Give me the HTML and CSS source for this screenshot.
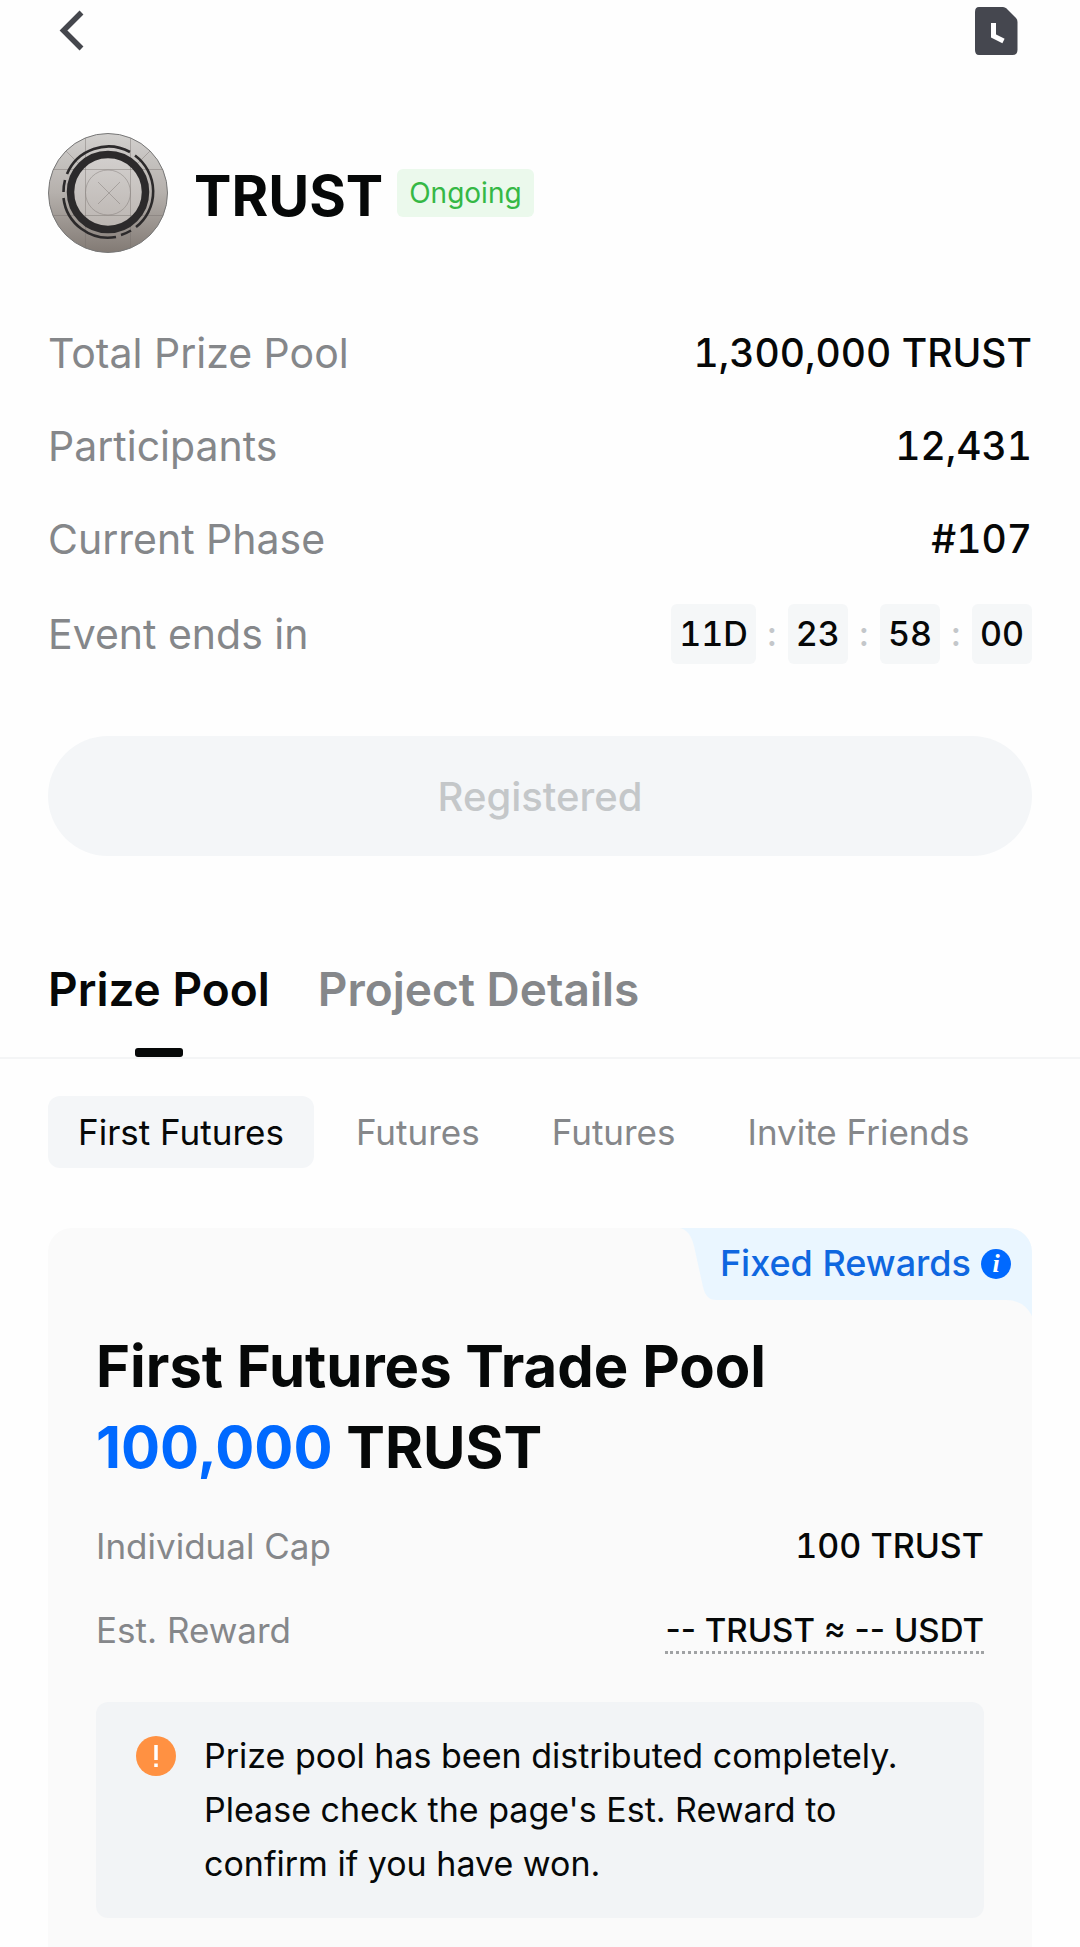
FILE: index.html
```html
<!DOCTYPE html>
<html lang="en">
<head>
    <meta charset="UTF-8">
    <meta name="viewport" content="width=device-width, initial-scale=1.0">
    <title>TRUST</title>
    <link rel="stylesheet" href="styles.css">
</head>
<body>
    <header class="topbar">
        <button type="button" class="icon-btn" aria-label="Back">
            <svg width="48" height="48" viewBox="0 0 48 48" fill="none" stroke="#45474d" stroke-width="5.500">
                <path d="M33.500 5.500 L15.500 23.500 L33.500 41.500"/>
            </svg>
        </button>
        <button type="button" class="icon-btn" aria-label="History">
            <svg width="44" height="48" viewBox="0 0 44 48">
                <path d="M5 0 H29 Q31 0 32.500 1.500 L42 11 Q43.500 12.500 43.500 15 V43 Q43.500 48 38.500 48 H5 Q1 48 1 43 V5 Q1 0 5 0 Z" fill="#45474f"/>
                <path d="M19.500 16 V29 L29.500 34" fill="none" stroke="#fff" stroke-width="5"/>
            </svg>
        </button>
    </header>

    <main>
        <section class="project">
            <div class="project-head">
                <svg class="logo" width="120" height="120" viewBox="0 0 120 120" fill="none">
                    <defs>
                        <linearGradient id="metal" x1="0" y1="0" x2="0" y2="1">
                            <stop offset="0" stop-color="#d2d0ce"/>
                            <stop offset="0.5" stop-color="#b5b0ac"/>
                            <stop offset="1" stop-color="#827a74"/>
                        </linearGradient>
                        <linearGradient id="shine" x1="0" y1="0" x2="0" y2="1">
                            <stop offset="0" stop-color="#d3d0ce"/>
                            <stop offset="1" stop-color="#bbb5b1"/>
                        </linearGradient>
                    </defs>
                    <circle cx="60" cy="60" r="59.500" fill="url(#metal)" stroke="#777"/>
                    <circle cx="60" cy="59" r="36" fill="url(#shine)"/>
                    <g stroke="#77716d" stroke-width="0.600" opacity="0.700">
                        <path d="M37.500 5 V115 M82.500 5 V115 M5 36.500 H115 M5 82.500 H115"/>
                        <path d="M18 18 L30 30 M102 18 L90 30 M50 49 L72 71 M72 49 L50 71"/>
                        <circle cx="60" cy="59.500" r="22.500"/>
                    </g>
                    <circle cx="60" cy="59" r="37.500" stroke="#2c2a2b" stroke-width="7.500"/>
                    <g stroke="#2c2a2b" stroke-width="2.600">
                        <path d="M19 41 A45 45 0 0 1 82 19"/>
                        <path d="M87 22.500 A45 45 0 0 1 88 94"/>
                        <path d="M83 97.500 A45 45 0 0 1 73 102"/>
                        <path d="M68 104 A45 45 0 0 1 15.500 65"/>
                        <path d="M15.500 59 A45 45 0 0 1 17 47"/>
                    </g>
                </svg>
                <h1 class="project-name">TRUST</h1>
                <span class="status">Ongoing</span>
            </div>

            <dl class="stats">
                <div class="stat">
                    <dt>Total Prize Pool</dt>
                    <dd>1,300,000 TRUST</dd>
                </div>
                <div class="stat">
                    <dt>Participants</dt>
                    <dd>12,431</dd>
                </div>
                <div class="stat">
                    <dt>Current Phase</dt>
                    <dd>#107</dd>
                </div>
                <div class="stat">
                    <dt>Event ends in</dt>
                    <dd class="countdown">
                        <span class="time">11D</span>
                        <span class="colon">:</span>
                        <span class="time">23</span>
                        <span class="colon">:</span>
                        <span class="time">58</span>
                        <span class="colon">:</span>
                        <span class="time">00</span>
                    </dd>
                </div>
            </dl>

            <button type="button" class="register-btn" disabled>Registered</button>
        </section>

        <nav class="tabs">
            <button type="button" class="tab active">Prize Pool</button>
            <button type="button" class="tab">Project Details</button>
        </nav>

        <nav class="subtabs">
            <button type="button" class="subtab active">First Futures</button>
            <button type="button" class="subtab">Futures</button>
            <button type="button" class="subtab">Futures</button>
            <button type="button" class="subtab">Invite Friends</button>
        </nav>

        <section class="card">
            <div class="ribbon">
                <svg class="ribbon-bg" width="352" height="88" viewBox="0 0 352 88">
                    <path d="M0 0 H328 A24 24 0 0 1 352 24 V88 Q344 72 326 72 H36 Q26 72 23 59 L14 18 Q10 2 0 0 Z" fill="#eaf6ff"/>
                </svg>
                <span class="ribbon-text">Fixed Rewards</span>
                <button type="button" class="info" aria-label="About fixed rewards">i</button>
            </div>
            <h2 class="card-title">First Futures Trade Pool<br><span class="amount">100,000</span> TRUST</h2>
            <dl class="details">
                <div class="detail">
                    <dt>Individual Cap</dt>
                    <dd>100 TRUST</dd>
                </div>
                <div class="detail">
                    <dt>Est. Reward</dt>
                    <dd class="dotted">-- TRUST ≈ -- USDT</dd>
                </div>
            </dl>
            <div class="notice">
                <svg class="notice-icon" width="40" height="40" viewBox="0 0 40 40">
                    <circle cx="20" cy="20" r="20" fill="#ff9142"/>
                    <path d="M20 9 V24 M20 27.500 V31" stroke="#fff" stroke-width="3.500"/>
                </svg>
                <p>Prize pool has been distributed completely. Please check the page's Est. Reward to confirm if you have won.</p>
            </div>
        </section>
    </main>
</body>
</html>
```
FILE: styles.css
```css
* {
    box-sizing: border-box;
}
body {
    font-family: Inter, "Liberation Sans", Arial, sans-serif;
    margin: 0;
    background-color: #fefefe;
    color: #060808;
}
button {
    font-family: inherit;
    border: none;
    padding: 0;
    background: none;
    cursor: pointer;
}
h1, h2, dl, dd, p {
    margin: 0;
}
svg {
    display: block;
}
.topbar {
    display: flex;
    justify-content: space-between;
    align-items: center;
    height: 62px;
    padding: 0 62px 0 48px;
}
.project {
    padding: 71px 48px 0;
}
.project-head {
    display: flex;
    align-items: center;
    margin-bottom: 70px;
}
.project-name {
    margin-left: 26px;
    padding-top: 6px;
    font-size: 56px;
    line-height: 64px;
    font-weight: 700;
}
.status {
    margin-left: 14px;
    padding: 0 12px;
    border-radius: 6px;
    background: #ebf9ec;
    color: #35b845;
    font-size: 28px;
    line-height: 48px;
}
.stats {
    display: flex;
    flex-direction: column;
    gap: 33px;
}
.stat {
    display: flex;
    justify-content: space-between;
    align-items: center;
    font-size: 39px;
    line-height: 60px;
}
.stat:last-child {
    margin-top: 2px;
}
dt {
    color: #85878a;
}
dd {
    font-weight: 500;
    font-variant-numeric: tabular-nums;
}
.stat dt {
    font-size: 41px;
}
.countdown {
    display: flex;
    font-size: 34px;
}
.time {
    min-width: 60px;
    padding: 0 8px;
    border-radius: 6px;
    background: #f5f7f8;
    text-align: center;
}
.colon {
    width: 32px;
    color: #c4c7ca;
    text-align: center;
}
.register-btn {
    width: 100%;
    height: 120px;
    margin-top: 72px;
    border-radius: 60px;
    background: #f4f6f8;
    color: #c4c7c9;
    font-size: 40px;
    font-weight: 500;
}
.tabs {
    display: flex;
    gap: 48px;
    margin-top: 105px;
    padding: 0 48px;
    border-bottom: 2px solid #f4f5f6;
}
.tab {
    position: relative;
    padding-bottom: 40px;
    color: #85878a;
    font-size: 46px;
    line-height: 56px;
    font-weight: 600;
}
.tab.active {
    color: #060808;
}
.tab.active::after {
    content: "";
    position: absolute;
    bottom: 0;
    left: 50%;
    width: 48px;
    height: 9px;
    margin-left: -24px;
    border-radius: 3px;
    background: #060808;
}
.subtabs {
    display: flex;
    gap: 12px;
    margin-top: 37px;
    padding: 0 48px;
}
.subtab {
    padding: 0 30px;
    border-radius: 12px;
    color: #85878a;
    font-size: 35px;
    line-height: 72px;
    white-space: nowrap;
}
.subtab.active {
    background: #f4f6f8;
    color: #060808;
}
.card {
    position: relative;
    margin: 60px 48px 0;
    padding: 98px 48px 30px;
    border-radius: 24px 24px 0 0;
    background: #fafafa;
}
.ribbon {
    position: absolute;
    top: 0;
    right: 0;
    display: flex;
    align-items: center;
    gap: 10px;
    height: 72px;
    padding-right: 21px;
}
.ribbon-bg {
    position: absolute;
    top: 0;
    right: 0;
}
.ribbon-text {
    position: relative;
    padding-bottom: 2px;
    color: #0f67e0;
    font-size: 36px;
    font-weight: 500;
}
.info {
    position: relative;
    width: 30px;
    height: 30px;
    border-radius: 50%;
    background: #0069ff;
    color: #fff;
    font: italic bold 26px/28px "Liberation Serif", serif;
}
.card-title {
    font-size: 58px;
    line-height: 81px;
    font-weight: 700;
}
.amount {
    color: #0069ff;
}
.details {
    display: flex;
    flex-direction: column;
    gap: 36px;
    margin-top: 34px;
}
.detail {
    display: flex;
    justify-content: space-between;
    font-size: 34px;
    line-height: 48px;
}
.detail dt {
    font-size: 35px;
}
.dotted {
    height: 48px;
    border-bottom: 3px dotted #a0a2a4;
    font-size: 33px;
    font-variant-numeric: normal;
}
.notice {
    display: flex;
    align-items: flex-start;
    gap: 28px;
    margin-top: 48px;
    padding: 27px 40px;
    border-radius: 12px;
    background: #f2f4f6;
    font-size: 34px;
    line-height: 54px;
}
.notice-icon {
    flex: none;
    margin-top: 7px;
}
```
